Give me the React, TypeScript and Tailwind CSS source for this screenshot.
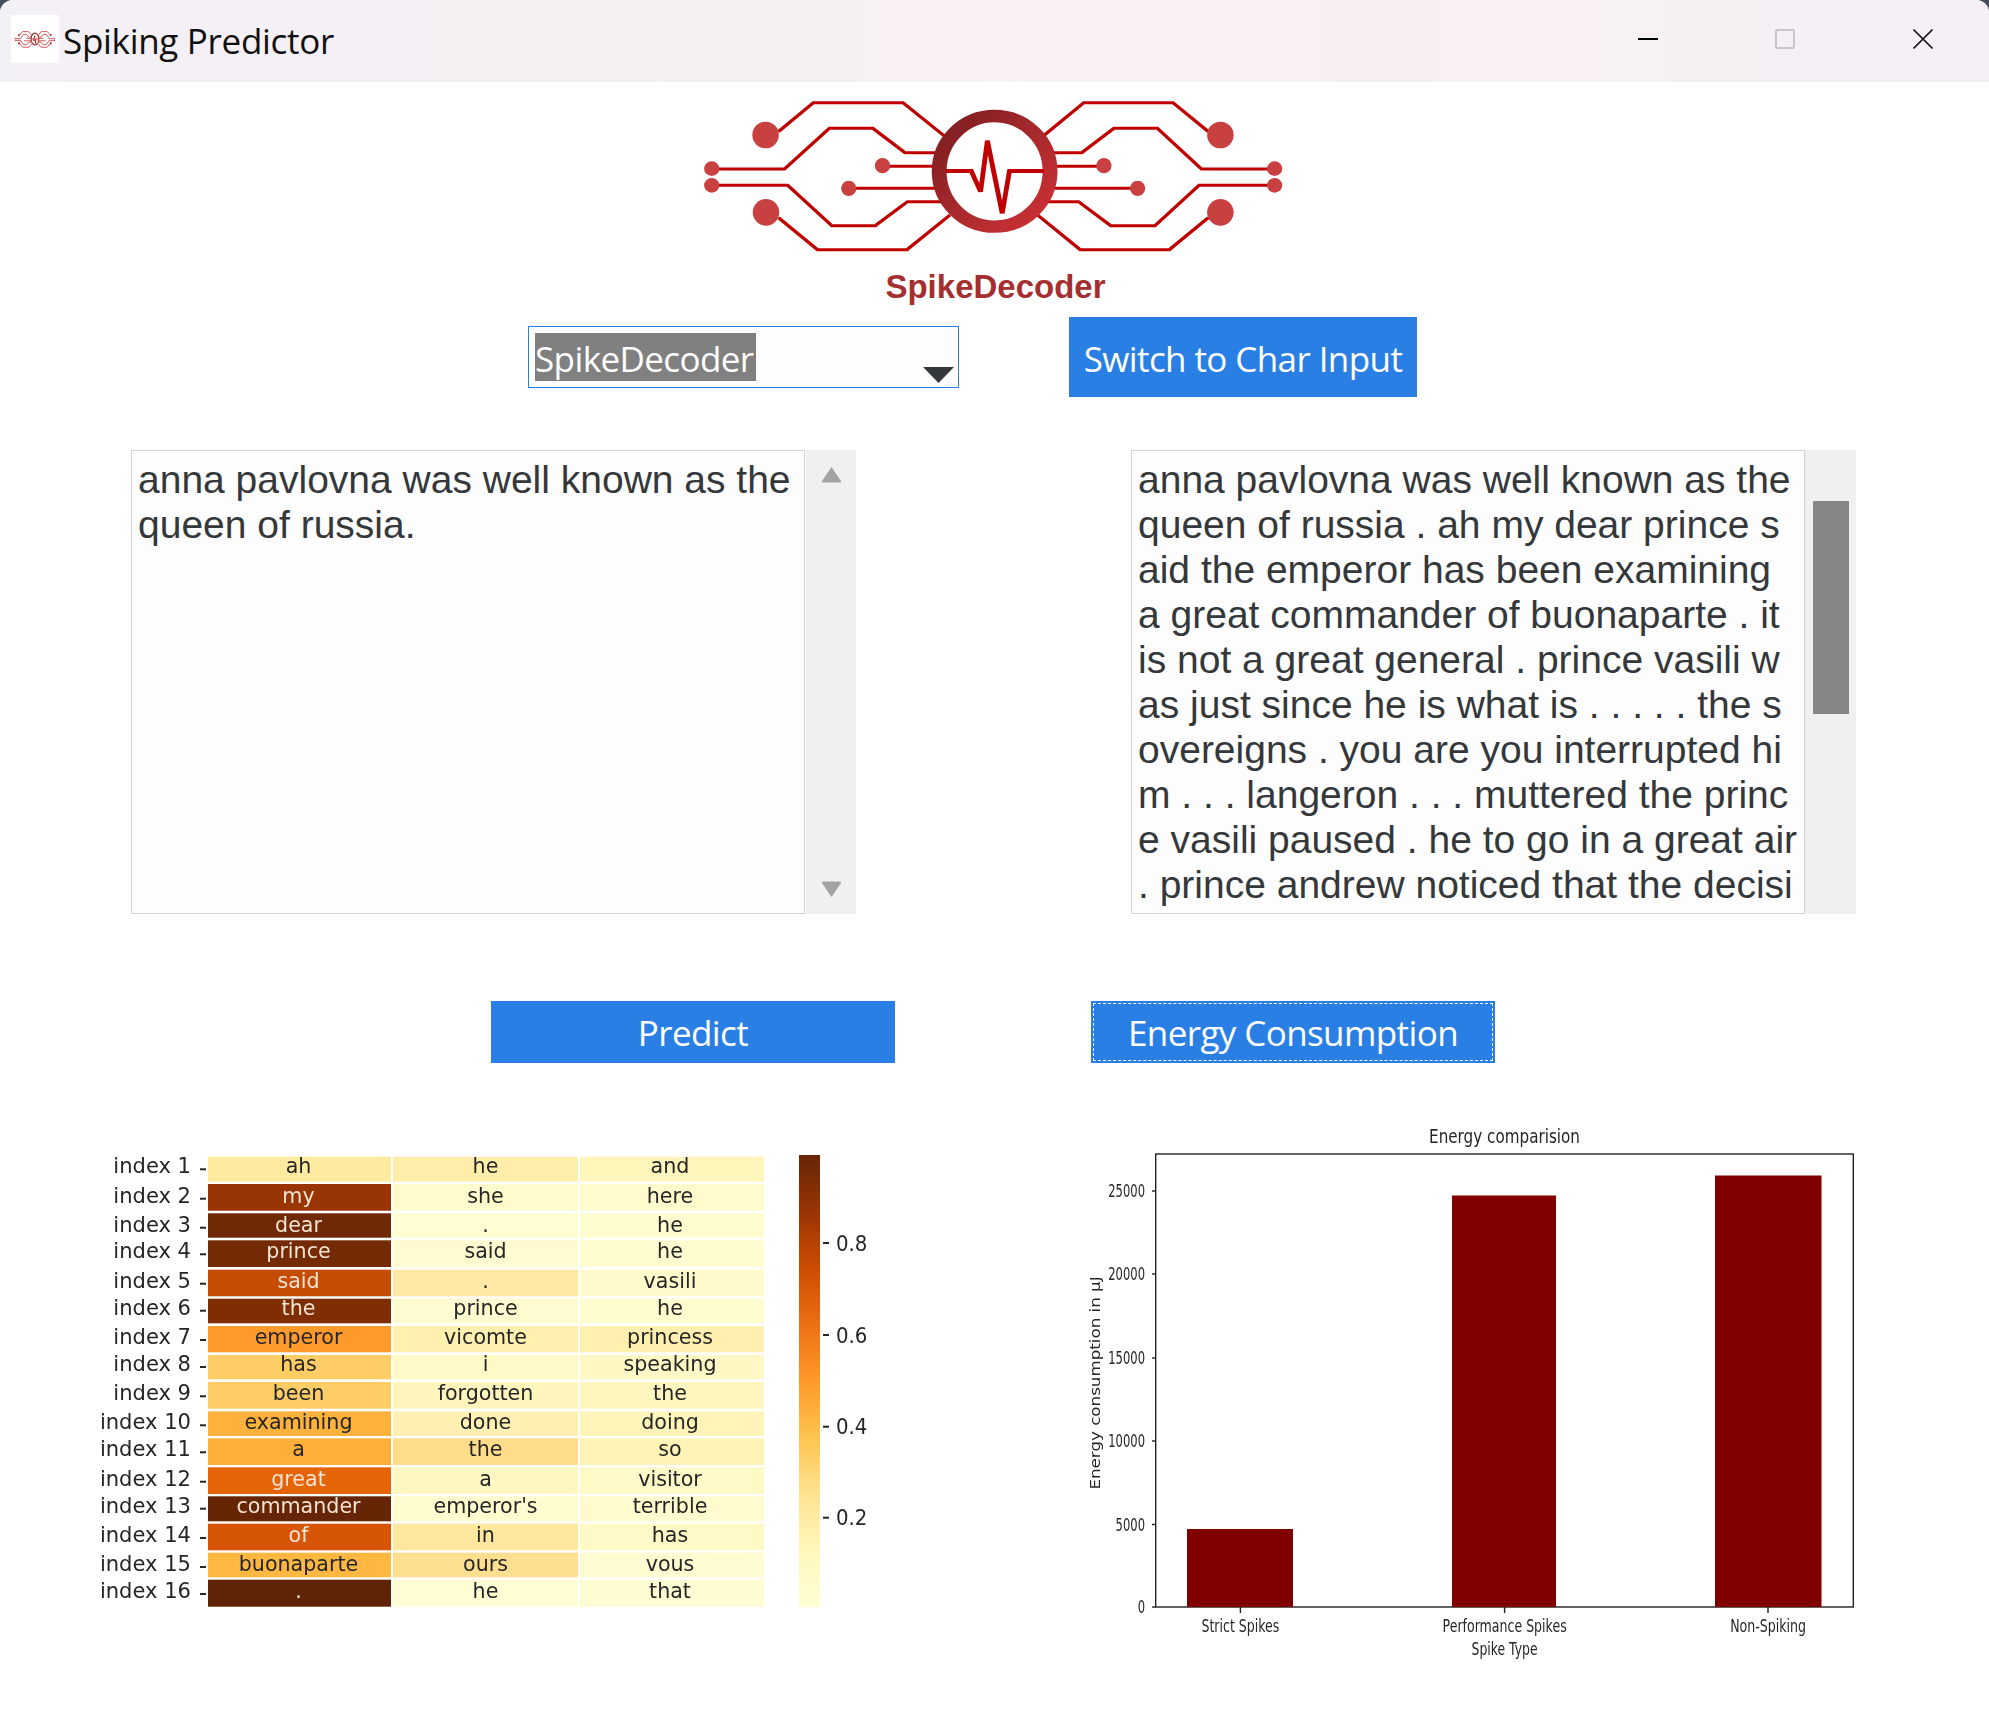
import React from 'react';

const dark = new Set(['#993404', '#6f2a05', '#742b05', '#c44d03', '#7f2e04', '#e66408', '#662505', '#d65507', '#5f2405']);

// Heatmap rows: label + three [word, cell colour] pairs
const heatRows: [string, [string, string], [string, string], [string, string]][] = [
  ['index 1', ['ah', '#ffeba0'], ['he', '#ffeeaa'], ['and', '#fff6bc']],
  ['index 2', ['my', '#993404'], ['she', '#fffbcd'], ['here', '#fffbcc']],
  ['index 3', ['dear', '#6f2a05'], ['.', '#fffdd2'], ['he', '#fffcd0']],
  ['index 4', ['prince', '#742b05'], ['said', '#fffad0'], ['he', '#fffcd0']],
  ['index 5', ['said', '#c44d03'], ['.', '#ffe9a4'], ['vasili', '#fffacb']],
  ['index 6', ['the', '#7f2e04'], ['prince', '#fffbd0'], ['he', '#fffcd0']],
  ['index 7', ['emperor', '#fe9a2b'], ['vicomte', '#fff0b0'], ['princess', '#fff0b0']],
  ['index 8', ['has', '#fecd66'], ['i', '#fff9c8'], ['speaking', '#fff7c4']],
  ['index 9', ['been', '#fecd66'], ['forgotten', '#fff5bd'], ['the', '#fff6bf']],
  ['index 10', ['examining', '#feb23c'], ['done', '#fff1b4'], ['doing', '#fff4b9']],
  ['index 11', ['a', '#feaf3a'], ['the', '#fedc8a'], ['so', '#fff4b8']],
  ['index 12', ['great', '#e66408'], ['a', '#fff7c1'], ['visitor', '#fff9c8']],
  ['index 13', ['commander', '#662505'], ["emperor's", '#fffcd0'], ['terrible', '#fffbce']],
  ['index 14', ['of', '#d65507'], ['in', '#ffe79d'], ['has', '#fff9c8']],
  ['index 15', ['buonaparte', '#feb841'], ['ours', '#fedf90'], ['vous', '#fffcd2']],
  ['index 16', ['.', '#5f2405'], ['he', '#fffdd4'], ['that', '#fffcd3']],
];

// Row geometry of the heatmap image, pixels below y = 1130
const rowTops = [26.7, 54, 83.3, 110.3, 139.7, 168.7, 196, 225, 252, 281.3, 308.3, 337.3, 366.3, 393.7, 422.7, 449.7];
const rowBottoms = [51.7, 80.7, 107.7, 137, 166.3, 193.3, 222.3, 249.3, 278.7, 306, 335, 364, 391.3, 420.3, 447.3, 476.7];
const rowBase = [43.3, 72.7, 101.7, 128.3, 157.7, 184.7, 214, 241, 270.3, 299.3, 326.3, 355.7, 382.7, 412, 441, 468];

const outputLines = [
  'anna pavlovna was well known as the',
  'queen of russia . ah my dear prince s',
  'aid the emperor has been examining',
  'a great commander of buonaparte . it',
  'is not a great general . prince vasili w',
  'as just since he is what is . . . . . the s',
  'overeigns . you are you interrupted hi',
  'm . . . langeron . . . muttered the princ',
  'e vasili paused . he to go in a great air',
  '. prince andrew noticed that the decisi',
];

const LogoMark = ({ className, viewBox, weight = 9 }: { className: string; viewBox: string; weight?: number }) => {
  const lines = [
    '245,155 332,68 555,68 658,168',
    '95,267 260,267 372,145 480,145 560,218 645,218',
    '520,259 645,259',
    '436,325 645,325',
    '95,316 268,316 378,437 486,437 566,365 655,365',
    '245,413 342,509 565,509 672,405',
    '1315,155 1227,68 1005,68 900,172',
    '1465,267 1298,267 1188,145 1080,145 1000,218 912,218',
    '1040,259 916,259',
    '1123,325 918,325',
    '1465,316 1292,316 1182,437 1072,437 992,365 906,365',
    '1315,413 1218,509 996,509 890,405',
  ];
  const dots: [number, number, number, number][] = [
    [213, 165, 33, 40], [79, 266, 19, 22], [504, 257, 19, 23], [420, 325, 19, 23], [79, 316, 19, 22], [214, 397, 33, 40],
    [1345, 165, 33, 40], [1480, 266, 19, 22], [1055, 257, 19, 23], [1139, 325, 19, 23], [1480, 316, 19, 22], [1345, 397, 33, 40],
  ];
  return (
    <svg className={className} viewBox={viewBox} preserveAspectRatio="none">
      <defs>
        <linearGradient id="ring" x1="0" y1="0" x2="1" y2="1">
          <stop offset="0" stopColor="#7a1d20" />
          <stop offset="0.55" stopColor="#ab2a2d" />
          <stop offset="1" stopColor="#cf3135" />
        </linearGradient>
      </defs>
      {lines.map((p) => (
        <polyline key={p} points={p} fill="none" stroke="#c00000" strokeWidth={weight} />
      ))}
      {dots.map(([cx, cy, rx, ry]) => (
        <ellipse key={`${cx}-${cy}`} cx={cx} cy={cy} rx={rx} ry={ry} fill="#c8403f" />
      ))}
      <ellipse cx="783" cy="274" rx="138" ry="166" fill="#fff" stroke="url(#ring)" strokeWidth="37" />
      <polyline points="662,273 725,273 748,335 765,182 802,400 820,273 906,273" fill="none" stroke="#c00000" strokeWidth={weight + 3} />
    </svg>
  );
};

const HeatMap = () => {
  const cols = [
    [208, 183, 298.5],
    [393, 185, 485.5],
    [580, 184, 670],
  ];
  return (
    <svg className="w-[820px] h-[500px] blur-[0.4px]" viewBox="80 1130 820 500" style={{ fontFamily: '"DejaVu Sans", sans-serif' }}>
      <defs>
        <linearGradient id="ylorbr" x1="0" y1="1" x2="0" y2="0">
          <stop offset="0" stopColor="#ffffd4" />
          <stop offset="0.125" stopColor="#fff7bc" />
          <stop offset="0.25" stopColor="#fee391" />
          <stop offset="0.375" stopColor="#fec44f" />
          <stop offset="0.5" stopColor="#fe9929" />
          <stop offset="0.625" stopColor="#ec7014" />
          <stop offset="0.75" stopColor="#cc4c02" />
          <stop offset="0.875" stopColor="#993404" />
          <stop offset="1" stopColor="#662506" />
        </linearGradient>
      </defs>
      {heatRows.map(([label, ...cells], i) => {
        const top = 1130 + rowTops[i];
        const height = rowBottoms[i] - rowTops[i];
        const base = 1130 + rowBase[i];
        return (
          <g key={label}>
            <text transform={`translate(191,${base}) scale(0.98,1)`} textAnchor="end" fontSize="21.5" fill="#262626">{label}</text>
            <rect x="200" y={base - 5} width="6" height="2" fill="#262626" />
            {cells.map(([word, color], c) => (
              <g key={c}>
                <rect x={cols[c][0]} y={top} width={cols[c][1]} height={height} fill={color} />
                <text
                  transform={`translate(${cols[c][2]},${base}) scale(0.96,1)`}
                  textAnchor="middle"
                  fontSize="21.5"
                  fill={dark.has(color) ? '#f3e3d3' : '#262626'}
                >
                  {word}
                </text>
              </g>
            ))}
          </g>
        );
      })}
      <rect x="799" y="1155" width="21" height="452" fill="url(#ylorbr)" />
      {[['0.8', 1243], ['0.6', 1335], ['0.4', 1426.7], ['0.2', 1517.7]].map(([t, y]) => (
        <g key={t as string}>
          <rect x="823" y={(y as number) - 1} width="6" height="2" fill="#262626" />
          <text transform={`translate(836,${(y as number) + 7.5}) scale(0.92,1)`} fontSize="21.5" fill="#262626">{t}</text>
        </g>
      ))}
    </svg>
  );
};

const BarChart = () => {
  const bars = [
    { x: 1187, w: 106, top: 1529, label: 'Strict Spikes', cx: 1240.4 },
    { x: 1452, w: 104, top: 1195.5, label: 'Performance Spikes', cx: 1504.6 },
    { x: 1715, w: 106.5, top: 1175.5, label: 'Non-Spiking', cx: 1768 },
  ];
  const ticks: [string, number][] = [['0', 1607], ['5000', 1524.5], ['10000', 1441], ['15000', 1358], ['20000', 1274], ['25000', 1191]];
  return (
    <svg className="w-[820px] h-[570px] blur-[0.4px]" viewBox="1060 1110 820 570" style={{ fontFamily: '"DejaVu Sans", sans-serif' }}>
      <text transform="translate(1504.5,1143) scale(0.76,1)" textAnchor="middle" fontSize="20" fill="#262626">Energy comparision</text>
      <text transform="translate(1099.5,1383) rotate(-90) scale(1,0.8)" textAnchor="middle" fontSize="16.7" fill="#262626">Energy consumption in µJ</text>
      <rect x="1155.7" y="1154" width="697.6" height="453" fill="#fff" stroke="#222" strokeWidth="1.4" />
      {bars.map((b) => (
        <g key={b.label}>
          <rect x={b.x} y={b.top} width={b.w} height={1607 - b.top} fill="#800000" />
          <rect x={b.cx - 0.7} y="1607" width="1.4" height="6" fill="#222" />
          <text transform={`translate(${b.cx},1632) scale(0.74,1)`} textAnchor="middle" fontSize="17" fill="#262626">{b.label}</text>
        </g>
      ))}
      {ticks.map(([t, y]) => (
        <g key={t}>
          <rect x="1152" y={y - 0.7} width="4" height="1.4" fill="#222" />
          <text transform={`translate(1145,${y + 6}) scale(0.68,1)`} textAnchor="end" fontSize="17" fill="#262626">{t}</text>
        </g>
      ))}
      <text transform="translate(1504.6,1655) scale(0.73,1)" textAnchor="middle" fontSize="17" fill="#262626">Spike Type</text>
    </svg>
  );
};

export default function App() {
  const uiFont = { fontFamily: '"Open Sans", sans-serif' };
  const textFont = { fontFamily: '"Liberation Sans", Arial, sans-serif' };

  return (
    <div className="min-h-[1733px] bg-[#47505a]">
      <div className="min-h-[1733px] bg-white rounded-t-[13px] overflow-hidden flex flex-col">
        {/* Barra de titulo */}
        <header className="h-[82px] flex items-center pl-[11px] pr-[56px] bg-linear-to-r from-[#f3f0f6] via-[#f8f0f2] to-[#f6eff5]">
          <div className="w-[48px] h-[48px] bg-white flex items-center justify-center mt-[-4px]">
            <LogoMark className="w-[44px] h-[17px]" viewBox="0 50 1568 480" weight={20} />
          </div>
          <span className="ml-[4px] text-[35px] tracking-[-0.3px] text-[#111]" style={uiFont}>Spiking Predictor</span>
          <div className="ml-auto flex items-center gap-[117px] mt-[-4px]">
            <div className="w-[20px] h-[2px] bg-black" />
            <div className="w-[20px] h-[20px] border-2 border-[#c9c5ca] rounded-[2px]" />
            <svg className="ml-[1px] w-[20px] h-[20px]" viewBox="0 0 20 20">
              <path d="M0.5 0.5 L19.5 19.5 M19.5 0.5 L0.5 19.5" stroke="#1d1d1d" strokeWidth="1.6" />
            </svg>
          </div>
        </header>

        {/* Logo */}
        <div className="flex flex-col items-center">
          <LogoMark className="w-[630px] h-[190px] blur-[0.3px]" viewBox="0 6 1568 570" />
          <div className="pl-[2px] text-[33px] font-bold text-[#a52f30] leading-[29px] mb-[16px]" style={textFont}>SpikeDecoder</div>
        </div>

        {/* Selector y boton */}
        <div className="flex items-center pl-[528px] gap-[110px] text-[35px] tracking-[-0.6px]" style={uiFont}>
          <div className="w-[431px] h-[62px] border border-[#2a7fe4] bg-[#fdfdfd] flex items-start pl-[6px] pt-[6px]">
            <span className="w-[221px] h-[48px] bg-[#808080] text-white leading-[52px] whitespace-nowrap">SpikeDecoder</span>
            <svg className="ml-auto mr-[4px] mt-[34px] w-[31px] h-[16px]" viewBox="0 0 31 16">
              <path d="M0 0 H31 L15.5 16 Z" fill="#35383b" />
            </svg>
          </div>
          <button className="w-[348px] h-[80px] pt-[4px] bg-[#2a7fe4] text-white whitespace-nowrap">Switch to Char Input</button>
        </div>

        {/* Entrada y salida */}
        <div className="flex mt-[53px] pl-[131px] h-[464px] text-[39px] leading-[45px] text-[#35383b]" style={textFont}>
          <div className="w-[674px] border border-[#d0d3dc] bg-[#fdfdfd] pl-[6px] pt-[6px] overflow-hidden">
            <div>anna pavlovna was well known as the</div>
            <div>queen of russia.</div>
          </div>
          <div className="ml-[1px] w-[50px] bg-[#f0f0f0] flex flex-col items-center justify-between py-[16px]">
            <svg className="w-[21px] h-[17px]" viewBox="0 0 21 17">
              <path d="M10.5 1 L20 15 Q20.5 16.5 19 16.5 H2 Q0.5 16.5 1 15 Z" fill="#a3a3a3" />
            </svg>
            <svg className="w-[21px] h-[17px]" viewBox="0 0 21 17">
              <path d="M10.5 16 L20 2 Q20.5 0.5 19 0.5 H2 Q0.5 0.5 1 2 Z" fill="#a3a3a3" />
            </svg>
          </div>
          <div className="ml-[275px] w-[674px] border border-[#d0d3dc] bg-[#fdfdfd] pl-[6px] pt-[6px] overflow-hidden whitespace-nowrap">
            {outputLines.map((line) => (
              <div key={line}>{line}</div>
            ))}
          </div>
          <div className="w-[51px] bg-[#f0f0f0] pl-[8px] pt-[51px]">
            <div className="w-[36px] h-[213px] bg-[#868686]" />
          </div>
        </div>

        {/* Botones de accion */}
        <div className="flex mt-[87px] pl-[491px] gap-[196px] text-[35px] tracking-[-0.6px] text-white" style={uiFont}>
          <button className="w-[404px] h-[62px] pt-[3px] bg-[#2a7fe4]">Predict</button>
          <button className="w-[404px] h-[62px] pt-[3px] bg-[#2a7fe4] outline-1 outline-dashed outline-white outline-offset-[-3px]">Energy Consumption</button>
        </div>

        {/* Graficas */}
        <div className="flex mt-[47px] pl-[80px] gap-[160px]">
          <div className="pt-[20px]">
            <HeatMap />
          </div>
          <BarChart />
        </div>
      </div>
    </div>
  );
}
